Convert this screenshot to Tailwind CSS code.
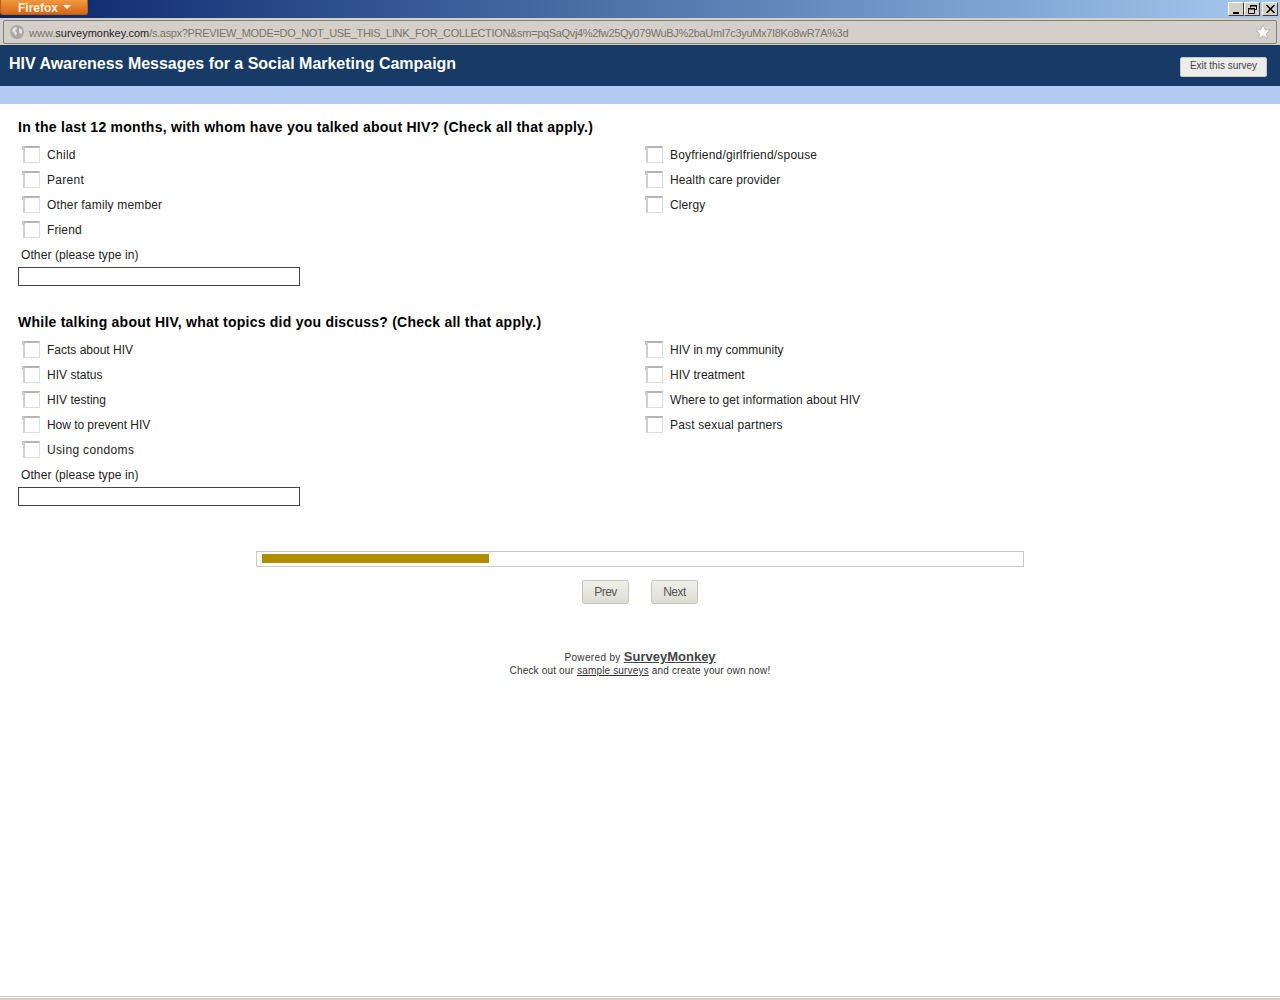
<!DOCTYPE html>
<html lang="en">
<head>
    <meta charset="UTF-8">
    <title>HIV Awareness Messages for a Social Marketing Campaign</title>
    <script src="https://cdn.jsdelivr.net/npm/@tailwindcss/browser@4"></script>
</head>
<body class="bg-white font-['Liberation_Sans',Arial,sans-serif] overflow-hidden">
<div class="h-[1000px] flex flex-col">
    <!-- Browser title bar -->
    <div class="h-[18px] shrink-0 flex justify-between bg-gradient-to-r from-[#0a246a] to-[#a6caf0]">
        <div class="w-[88px] h-[15px] rounded-b-[3px] bg-gradient-to-b from-[#f09a3e] to-[#d9650f] border border-t-0 border-[#b9601a] flex items-center pl-[17px] gap-[5px]">
            <span class="text-[12px] leading-none mt-[1px] font-bold text-[#fdf3e4]">Firefox</span>
            <span class="w-0 h-0 border-l-[4px] border-r-[4px] border-t-[4px] border-l-transparent border-r-transparent border-t-white"></span>
        </div>
        <div class="flex pt-[2px] pr-[2px]">
            <div class="w-[16px] h-[14px] bg-[#d4d0c8] border border-t-white border-l-white border-r-[#404040] border-b-[#404040] flex items-end justify-center pb-[1px]"><span class="w-[6px] h-[2px] bg-black"></span></div>
            <div class="w-[16px] h-[14px] bg-[#d4d0c8] border border-t-white border-l-white border-r-[#404040] border-b-[#404040] flex items-center justify-center">
                <svg width="9" height="9" viewBox="0 0 9 9" fill="none" stroke="#000"><path d="M2.500 2.500V.5h6v4h-2M2 1h7"/><path d="M.5 3.500h6v5h-6zM0 4h7"/></svg>
            </div>
            <div class="w-[16px] h-[14px] ml-[2px] bg-[#d4d0c8] border border-t-white border-l-white border-r-[#404040] border-b-[#404040] flex items-center justify-center">
                <svg width="9" height="8" viewBox="0 0 9 8" stroke="#000" stroke-width="1.500"><path d="M.5 0l8 8M8.500 0l-8 8"/></svg>
            </div>
        </div>
    </div>

    <!-- Address bar -->
    <div class="h-[27px] shrink-0 bg-[#d4d0c8] pt-[2px] px-[3px]">
        <div class="h-[24px] border border-[#808080] rounded-[2px] flex items-center justify-between pl-[6px] pr-[5px]">
            <div class="flex items-center gap-[5px]">
                <svg width="14" height="14" viewBox="0 0 14 14"><circle cx="7" cy="7" r="7" fill="#a9a8a6"/><path d="M3 3l3-1 1 2-2 2 2 2-1 3-2-3-2-2zM9 3l3 2 0 3-2 1-1-3z" fill="#e6e4e0"/></svg>
                <span class="text-[11px] leading-[14px] mt-[2px] text-[#77736c] tracking-[-0.33px]"><span class="tracking-normal">www.<span class="text-[#1c1c2c]">surveymonkey.com</span></span>/s.aspx?PREVIEW_MODE=DO_NOT_USE_THIS_LINK_FOR_COLLECTION&amp;sm=pqSaQvj4%2fw25Qy079WuBJ%2baUmI7c3yuMx7I8Ko8wR7A%3d</span>
            </div>
            <svg width="16" height="16" viewBox="0 0 16 16"><path d="M8 .8l2.200 4.700 5 .6-3.700 3.400 1 5L8 12l-4.500 2.500 1-5L.8 6.100l5-.6z" fill="#fff" stroke="#b8b5ae"/></svg>
        </div>
    </div>

    <!-- Survey header -->
    <div class="h-[41px] shrink-0 bg-[#173a66] flex justify-between pl-[9px] pr-[13px]">
        <h1 class="mt-[10px] text-[16px] leading-[18px] font-bold text-white tracking-[-0.02px]">HIV Awareness Messages for a Social Marketing Campaign</h1>
        <button class="mt-[12px] w-[87px] h-[20px] pb-[2px] bg-[#ececea] border border-[#c8c8c4] rounded-[2px] text-[10px] leading-none text-[#444]">Exit this survey</button>
    </div>
    <div class="h-[18px] shrink-0 bg-[#b2cbef]"></div>

    <main class="grow px-[18px] pt-[15px]">
        <!-- Question 1 -->
        <section class="h-[195px]">
            <h2 class="text-[14px] leading-[16px] font-bold text-black tracking-[0.26px]">In the last 12 months, with whom have you talked about HIV? (Check all that apply.)</h2>
            <div class="grid grid-cols-[623px_1fr] mt-[7px]">
                <div class="flex flex-col">
                    <label class="h-[25px] flex items-center pl-[5px] gap-[7px] text-[12px] tracking-[0.3px] text-[#222]"><span class="relative w-[17px] h-[17px] mb-[1px] border-[#dedede] border border-t-2 border-l-2 border-t-[#b4b4b4] border-l-[#cfcfcf] before:absolute before:left-[-3px] before:top-[-2px] before:w-px before:h-[4px] before:bg-[#c8c8c8]"></span>Child</label>
                    <label class="h-[25px] flex items-center pl-[5px] gap-[7px] text-[12px] tracking-[0.28px] text-[#222]"><span class="relative w-[17px] h-[17px] mb-[1px] border-[#dedede] border border-t-2 border-l-2 border-t-[#b4b4b4] border-l-[#cfcfcf] before:absolute before:left-[-3px] before:top-[-2px] before:w-px before:h-[4px] before:bg-[#c8c8c8]"></span>Parent</label>
                    <label class="h-[25px] flex items-center pl-[5px] gap-[7px] text-[12px] tracking-[0.17px] text-[#222]"><span class="relative w-[17px] h-[17px] mb-[1px] border-[#dedede] border border-t-2 border-l-2 border-t-[#b4b4b4] border-l-[#cfcfcf] before:absolute before:left-[-3px] before:top-[-2px] before:w-px before:h-[4px] before:bg-[#c8c8c8]"></span>Other family member</label>
                    <label class="h-[25px] flex items-center pl-[5px] gap-[7px] text-[12px] tracking-[0.12px] text-[#222]"><span class="relative w-[17px] h-[17px] mb-[1px] border-[#dedede] border border-t-2 border-l-2 border-t-[#b4b4b4] border-l-[#cfcfcf] before:absolute before:left-[-3px] before:top-[-2px] before:w-px before:h-[4px] before:bg-[#c8c8c8]"></span>Friend</label>
                </div>
                <div class="flex flex-col">
                    <label class="h-[25px] flex items-center pl-[5px] gap-[7px] text-[12px] tracking-[0.19px] text-[#222]"><span class="relative w-[17px] h-[17px] mb-[1px] border-[#dedede] border border-t-2 border-l-2 border-t-[#b4b4b4] border-l-[#cfcfcf] before:absolute before:left-[-3px] before:top-[-2px] before:w-px before:h-[4px] before:bg-[#c8c8c8]"></span>Boyfriend/girlfriend/spouse</label>
                    <label class="h-[25px] flex items-center pl-[5px] gap-[7px] text-[12px] tracking-[0.12px] text-[#222]"><span class="relative w-[17px] h-[17px] mb-[1px] border-[#dedede] border border-t-2 border-l-2 border-t-[#b4b4b4] border-l-[#cfcfcf] before:absolute before:left-[-3px] before:top-[-2px] before:w-px before:h-[4px] before:bg-[#c8c8c8]"></span>Health care provider</label>
                    <label class="h-[25px] flex items-center pl-[5px] gap-[7px] text-[12px] tracking-[0.12px] text-[#222]"><span class="relative w-[17px] h-[17px] mb-[1px] border-[#dedede] border border-t-2 border-l-2 border-t-[#b4b4b4] border-l-[#cfcfcf] before:absolute before:left-[-3px] before:top-[-2px] before:w-px before:h-[4px] before:bg-[#c8c8c8]"></span>Clergy</label>
                </div>
            </div>
            <p class="h-[25px] flex items-center pl-[3px] text-[12px] tracking-[0.1px] text-[#222]">Other (please type in)</p>
            <div class="w-[282px] h-[19px] border border-[#444]"></div>
        </section>

        <!-- Question 2 -->
        <section class="h-[220px]">
            <h2 class="text-[14px] leading-[16px] font-bold text-black tracking-[0.24px]">While talking about HIV, what topics did you discuss? (Check all that apply.)</h2>
            <div class="grid grid-cols-[623px_1fr] mt-[7px]">
                <div class="flex flex-col">
                    <label class="h-[25px] flex items-center pl-[5px] gap-[7px] text-[12px] tracking-normal text-[#222]"><span class="relative w-[17px] h-[17px] mb-[1px] border-[#dedede] border border-t-2 border-l-2 border-t-[#b4b4b4] border-l-[#cfcfcf] before:absolute before:left-[-3px] before:top-[-2px] before:w-px before:h-[4px] before:bg-[#c8c8c8]"></span>Facts about HIV</label>
                    <label class="h-[25px] flex items-center pl-[5px] gap-[7px] text-[12px] tracking-[0.02px] text-[#222]"><span class="relative w-[17px] h-[17px] mb-[1px] border-[#dedede] border border-t-2 border-l-2 border-t-[#b4b4b4] border-l-[#cfcfcf] before:absolute before:left-[-3px] before:top-[-2px] before:w-px before:h-[4px] before:bg-[#c8c8c8]"></span>HIV status</label>
                    <label class="h-[25px] flex items-center pl-[5px] gap-[7px] text-[12px] tracking-[0.03px] text-[#222]"><span class="relative w-[17px] h-[17px] mb-[1px] border-[#dedede] border border-t-2 border-l-2 border-t-[#b4b4b4] border-l-[#cfcfcf] before:absolute before:left-[-3px] before:top-[-2px] before:w-px before:h-[4px] before:bg-[#c8c8c8]"></span>HIV testing</label>
                    <label class="h-[25px] flex items-center pl-[5px] gap-[7px] text-[12px] tracking-[-0.05px] text-[#222]"><span class="relative w-[17px] h-[17px] mb-[1px] border-[#dedede] border border-t-2 border-l-2 border-t-[#b4b4b4] border-l-[#cfcfcf] before:absolute before:left-[-3px] before:top-[-2px] before:w-px before:h-[4px] before:bg-[#c8c8c8]"></span>How to prevent HIV</label>
                    <label class="h-[25px] flex items-center pl-[5px] gap-[7px] text-[12px] tracking-[0.35px] text-[#222]"><span class="relative w-[17px] h-[17px] mb-[1px] border-[#dedede] border border-t-2 border-l-2 border-t-[#b4b4b4] border-l-[#cfcfcf] before:absolute before:left-[-3px] before:top-[-2px] before:w-px before:h-[4px] before:bg-[#c8c8c8]"></span>Using condoms</label>
                </div>
                <div class="flex flex-col">
                    <label class="h-[25px] flex items-center pl-[5px] gap-[7px] text-[12px] tracking-[0.01px] text-[#222]"><span class="relative w-[17px] h-[17px] mb-[1px] border-[#dedede] border border-t-2 border-l-2 border-t-[#b4b4b4] border-l-[#cfcfcf] before:absolute before:left-[-3px] before:top-[-2px] before:w-px before:h-[4px] before:bg-[#c8c8c8]"></span>HIV in my community</label>
                    <label class="h-[25px] flex items-center pl-[5px] gap-[7px] text-[12px] tracking-[0.04px] text-[#222]"><span class="relative w-[17px] h-[17px] mb-[1px] border-[#dedede] border border-t-2 border-l-2 border-t-[#b4b4b4] border-l-[#cfcfcf] before:absolute before:left-[-3px] before:top-[-2px] before:w-px before:h-[4px] before:bg-[#c8c8c8]"></span>HIV treatment</label>
                    <label class="h-[25px] flex items-center pl-[5px] gap-[7px] text-[12px] tracking-[0.06px] text-[#222]"><span class="relative w-[17px] h-[17px] mb-[1px] border-[#dedede] border border-t-2 border-l-2 border-t-[#b4b4b4] border-l-[#cfcfcf] before:absolute before:left-[-3px] before:top-[-2px] before:w-px before:h-[4px] before:bg-[#c8c8c8]"></span>Where to get information about HIV</label>
                    <label class="h-[25px] flex items-center pl-[5px] gap-[7px] text-[12px] tracking-[0.17px] text-[#222]"><span class="relative w-[17px] h-[17px] mb-[1px] border-[#dedede] border border-t-2 border-l-2 border-t-[#b4b4b4] border-l-[#cfcfcf] before:absolute before:left-[-3px] before:top-[-2px] before:w-px before:h-[4px] before:bg-[#c8c8c8]"></span>Past sexual partners</label>
                </div>
            </div>
            <p class="h-[25px] flex items-center pl-[3px] text-[12px] tracking-[0.1px] text-[#222]">Other (please type in)</p>
            <div class="w-[282px] h-[19px] border border-[#444]"></div>
        </section>

        <!-- Progress -->
        <div class="w-[768px] h-[16px] mx-auto mt-[17px] border border-[#c8c8c8] pl-[5px] pt-[2px]">
            <div class="w-[227px] h-[9px] bg-[#ae8d00]"></div>
        </div>

        <div class="flex justify-center gap-[22px] mt-[13px]">
            <button class="w-[47px] h-[24px] rounded-[3px] border border-[#c4c4bc] bg-gradient-to-b from-[#f0f0ea] to-[#dcdcd4] text-[12px] tracking-[-0.5px] text-[#555]">Prev</button>
            <button class="w-[47px] h-[24px] rounded-[3px] border border-[#c4c4bc] bg-gradient-to-b from-[#f0f0ea] to-[#dcdcd4] text-[12px] tracking-[-0.5px] text-[#555]">Next</button>
        </div>

        <!-- Footer -->
        <div class="mt-[46px] text-center text-[#333]">
            <p class="text-[10px] leading-[14px] tracking-[0.35px]">Powered by <a href="#" class="text-[13px] font-bold underline text-[#444] tracking-normal">SurveyMonkey</a></p>
            <p class="text-[10px] leading-[12px] tracking-[0.17px]">Check out our <a href="#" class="underline">sample surveys</a> and create your own now!</p>
        </div>
    </main>

    <!-- Browser status bar edge -->
    <div class="h-[4px] shrink-0 bg-[#d4d0c8] border-t border-t-[#d8d0c4]"><div class="h-px bg-white"></div></div>
</div>
</body>
</html>
